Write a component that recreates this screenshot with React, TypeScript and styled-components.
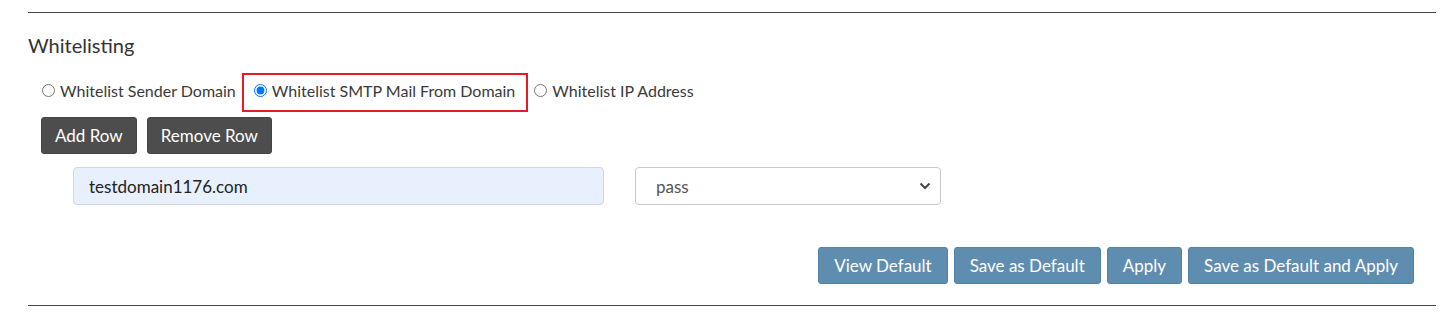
import React from "react";
import styled, { createGlobalStyle } from "styled-components";

const Global = createGlobalStyle`
  html, body { margin: 0; padding: 0; background: #fff; }
  body { font-family: Lato, "Open Sans", sans-serif; color: #333; }
  * { box-sizing: border-box; }
`;

const Section = styled.section`
  margin: 12px 11px 0 28px;
  border-top: 1px solid #474747;
  border-bottom: 1px solid #474747;
  display: flex;
  flex-direction: column;
  padding-bottom: 21px;
`;

const Title = styled.h3`
  margin: 20px 0 0 0;
  font-size: 20px;
  line-height: 24px;
  font-weight: 400;
  color: #333;
`;

const RadioRow = styled.div`
  display: flex;
  align-items: center;
  gap: 6px;
  height: 39px;
  margin-top: 16px;
  padding-left: 14px;
`;

const RadioLabel = styled.label<{ $highlight?: boolean }>`
  display: flex;
  align-items: center;
  gap: 5px;
  font-size: 16px;
  color: #3a3a3a;
  height: 39px;
  padding: ${(p) => (p.$highlight ? "0 11px 4px 10px" : "0 0 4px 0")};
  border: ${(p) => (p.$highlight ? "2px solid #e51c24" : "none")};
`;

const Radio = styled.input`
  margin: 0;
  width: 13px;
  height: 13px;
`;

const ButtonRow = styled.div`
  display: flex;
  gap: 10px;
  margin-top: 5px;
  padding-left: 13px;
`;

const DarkButton = styled.button`
  height: 37px;
  padding: 0 13px;
  background: #4d4d4d;
  border: 1px solid #444;
  border-radius: 3px;
  color: #fff;
  font-family: inherit;
  font-size: 17px;
`;

const FieldRow = styled.div`
  display: flex;
  gap: 31px;
  margin-top: 13px;
  padding-left: 45px;
`;

const TextInput = styled.input`
  width: 531px;
  height: 38px;
  padding: 0 15px;
  background: #e8f0fe;
  border: 1px solid #d0d7e0;
  border-radius: 4px;
  font-family: inherit;
  font-size: 17px;
  color: #222;
  outline: none;
`;

const SelectWrap = styled.div`
  position: relative;
  width: 306px;
  height: 38px;
`;

const Select = styled.select`
  appearance: none;
  width: 100%;
  height: 100%;
  padding: 0 20px;
  background: #fff;
  border: 1px solid #c8c8c8;
  border-radius: 4px;
  font-family: inherit;
  font-size: 17px;
  color: #555;
  outline: none;
`;

const Chevron = styled.svg`
  position: absolute;
  right: 10px;
  top: 15px;
  pointer-events: none;
`;

const ActionRow = styled.div`
  display: flex;
  justify-content: flex-end;
  gap: 6px;
  margin-top: 42px;
  padding-right: 22px;
`;

const ActionButton = styled.button`
  height: 37px;
  padding: 0 15px;
  background: #5f8db0;
  border: 1px solid #5482a6;
  border-radius: 3px;
  color: #fff;
  font-family: inherit;
  font-size: 17px;
`;

export default function App() {
  return (
    <>
      <Global />
      <Section>
        <Title>Whitelisting</Title>
        <RadioRow>
          <RadioLabel>
            <Radio type="radio" name="wl" />
            Whitelist Sender Domain
          </RadioLabel>
          <RadioLabel $highlight>
            <Radio type="radio" name="wl" defaultChecked />
            Whitelist SMTP Mail From Domain
          </RadioLabel>
          <RadioLabel>
            <Radio type="radio" name="wl" />
            Whitelist IP Address
          </RadioLabel>
        </RadioRow>
        <ButtonRow>
          <DarkButton>Add Row</DarkButton>
          <DarkButton>Remove Row</DarkButton>
        </ButtonRow>
        <FieldRow>
          <TextInput defaultValue="testdomain1176.com" />
          <SelectWrap>
            <Select defaultValue="pass">
              <option value="pass">pass</option>
              <option value="fail">fail</option>
            </Select>
            <Chevron width="12" height="8" viewBox="0 0 12 8">
              <path d="M1.5 1.5 L6 6 L10.5 1.5" fill="none" stroke="#444" strokeWidth="2" />
            </Chevron>
          </SelectWrap>
        </FieldRow>
        <ActionRow>
          <ActionButton>View Default</ActionButton>
          <ActionButton>Save as Default</ActionButton>
          <ActionButton>Apply</ActionButton>
          <ActionButton>Save as Default and Apply</ActionButton>
        </ActionRow>
      </Section>
    </>
  );
}
